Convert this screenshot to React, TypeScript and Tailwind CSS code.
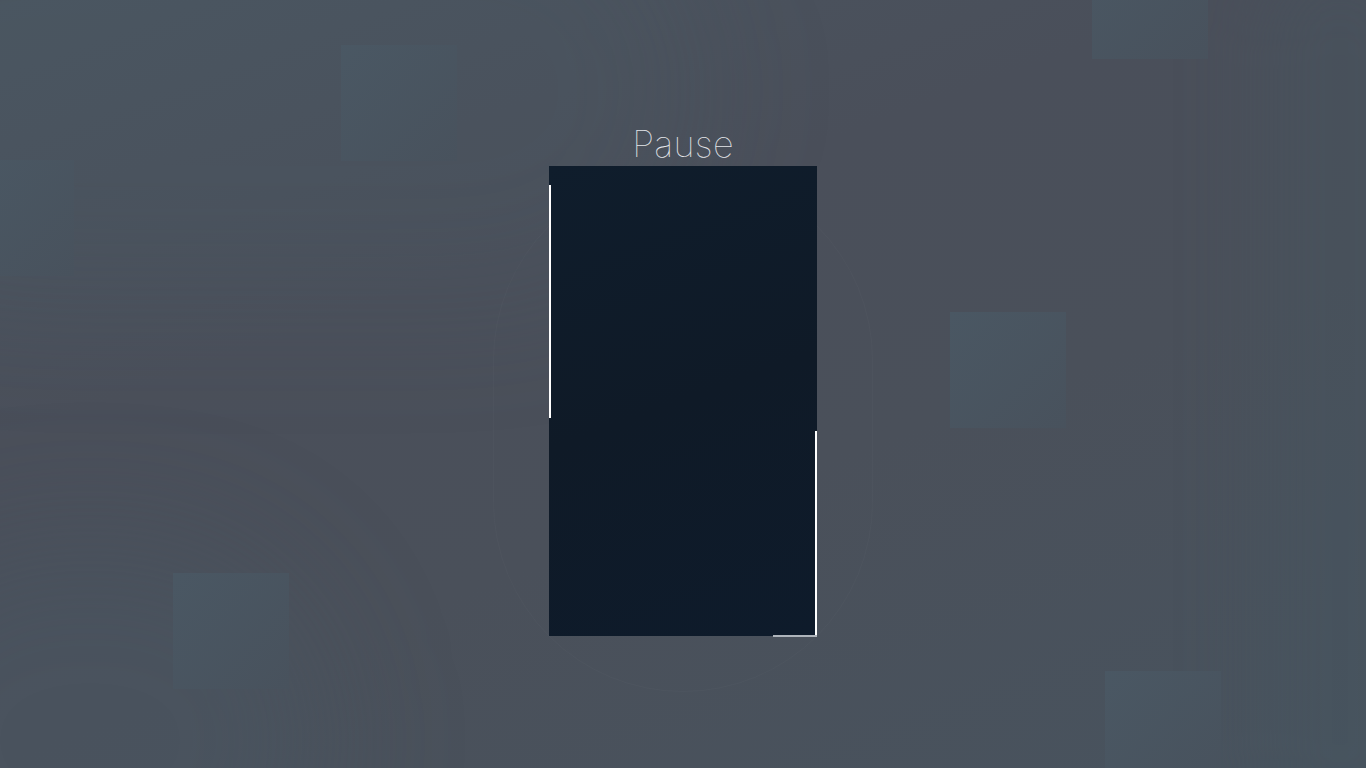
const squares = [
  "left-[341px] top-[45px]",
  "left-[-42px] top-[160px]",
  "left-[1092px] top-[-57px]",
  "left-[950px] top-[312px]",
  "left-[173px] top-[573px]",
  "left-[1105px] top-[671px]",
];

export default function App() {
  return (
    <div className="relative w-full h-[768px] overflow-hidden bg-[#4a505a] font-['Inter',sans-serif]">
      {/* soft background sweeps */}
      <div className="absolute inset-0 bg-[linear-gradient(160deg,#4a5560_0%,#4a4f5a_35%,#4a505a_60%,#48535e_100%)]" />
      <div className="absolute left-[-200px] top-[-120px] w-[900px] h-[420px] rounded-full bg-[#4b5862]/20 blur-3xl" />
      <div className="absolute left-[1260px] top-[-50px] w-[160px] h-[900px] rounded-full bg-[#475560]/30 blur-2xl" />
      <div className="absolute left-[-150px] top-[540px] w-[480px] h-[400px] rounded-full bg-[#4a5866]/30 blur-3xl" />

      {squares.map((pos) => (
        <div
          key={pos}
          className={`absolute ${pos} w-[116px] h-[116px] bg-[linear-gradient(135deg,#4a5864,#48525d)] opacity-90`}
        />
      ))}

      {/* faint ring behind the panel */}
      <div className="absolute left-[493px] top-[170px] w-[380px] h-[522px] rounded-full border border-white/[0.02]" />

      <div className="relative flex flex-col items-center pt-[122px]">
        <h1 className="text-[36px] leading-[44px] font-thin text-[#e4e6ea] tracking-[0.3px]">Pause</h1>
        <div className="relative w-[268px] h-[470px] bg-[linear-gradient(160deg,#0f1d2c_0%,#0f1a27_50%,#0e1b2b_100%)]">
          <div className="absolute left-0 top-[19px] w-[2px] h-[233px] bg-white" />
          <div className="absolute right-0 top-[265px] w-[2px] h-[206px] bg-white" />
          <div className="absolute right-0 bottom-[-1px] w-[44px] h-[2px] bg-[#aeb4bb]" />
        </div>
      </div>
    </div>
  );
}
